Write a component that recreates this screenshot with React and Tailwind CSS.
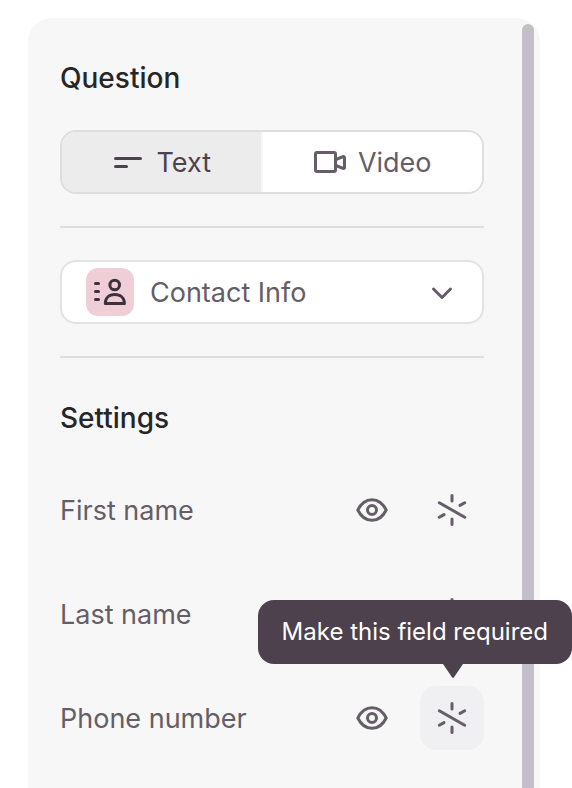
function Svg({ size = 32, children }) {
  return (
    <svg
      width={size}
      height={size}
      viewBox={`0 0 ${size} ${size}`}
      fill="none"
      stroke="currentColor"
      strokeWidth="3"
      strokeLinecap="round"
      strokeLinejoin="round"
      className="shrink-0"
      aria-hidden="true"
    >
      {children}
    </svg>
  );
}

function TextIcon() {
  return (
    <Svg>
      <path d="M3.5 12.5h25M3.5 20.5h11" />
    </Svg>
  );
}

function VideoIcon() {
  return (
    <Svg>
      <rect x="1.5" y="6.5" width="20" height="19" rx="1.5" />
      <path d="M22 13.5 29 10.6Q30.5 10.2 30.5 11.6V21.4Q30.5 22.8 29 22.4L22 19.5" />
    </Svg>
  );
}

function ContactIcon() {
  return (
    <Svg size={48}>
      <path d="M9.5 15.5h3M9.5 23.5h3M9.5 31.5h3" />
      <circle cx="28.7" cy="17" r="4.8" />
      <path d="M19.3 35.5C19.3 30.2 23 26.6 28.8 26.6S38.4 30.2 38.4 35.5Z" />
    </Svg>
  );
}

function ChevronIcon() {
  return (
    <Svg>
      <path d="m7.5 13 8.5 8.5 8.5-8.5" />
    </Svg>
  );
}

function EyeIcon() {
  return (
    <Svg>
      <path d="M1.8 16C5 9.6 10 5.7 16 5.7S27 9.6 30.2 16C27 22.4 22 26.3 16 26.3S5 22.4 1.8 16Z" />
      <circle cx="16" cy="16" r="4.5" />
    </Svg>
  );
}

function OptionalIcon() {
  return (
    <Svg>
      <path d="M16 1.5v5.5M16 25v5.5M3.3 8.7l25.4 14.6M28.7 8.7l-4.7 2.7M3.3 23.3l4.7-2.7" />
    </Svg>
  );
}

function FieldRow({ name, hint }) {
  return (
    <li className="flex h-16 items-center">
      <span className="flex-1">{name}</span>
      <button
        type="button"
        aria-label={`Show ${name}`}
        className="mr-4 flex size-16 items-center justify-center rounded-2xl"
      >
        <EyeIcon />
      </button>
      <div className="relative">
        <button
          type="button"
          aria-label={`Make ${name} required`}
          className={`flex size-16 items-center justify-center rounded-2xl ${hint ? "bg-[#f0f0f3]" : ""}`}
        >
          <OptionalIcon />
        </button>
        {hint && (
          <div
            role="tooltip"
            className="absolute -right-22 bottom-full mb-[22px] flex h-16 items-center rounded-2xl bg-[#4c414c] px-6 text-2xl whitespace-nowrap text-white"
          >
            {hint}
            <svg
              width="20"
              height="14"
              viewBox="0 0 20 14"
              className="absolute top-full right-[109px] fill-[#4c414c]"
              aria-hidden="true"
            >
              <path d="M0 0H20L11 13.2Q10 14.4 9 13.2Z" />
            </svg>
          </div>
        )}
      </div>
    </li>
  );
}

const fields = [
  { name: "First name" },
  { name: "Last name" },
  { name: "Phone number", hint: "Make this field required" },
];

export default function App() {
  return (
    <main className="flex h-screen overflow-hidden bg-white pt-[18px] pr-8 pl-7 font-['Inter','Liberation_Sans',sans-serif] text-[27px] leading-[41px] text-[#655d67]">
      <div className="flex flex-1 rounded-t-3xl bg-[#f7f7f7]">
        <div className="flex-1 pt-10 pl-8">
          <h2 className="text-[28px] leading-10 font-medium text-[#262627]">Question</h2>
          <div className="mt-8 flex h-16 gap-0.5 overflow-hidden rounded-2xl border-2 border-[#dedede]">
            <button
              type="button"
              aria-pressed="true"
              className="flex flex-auto items-center justify-center gap-3 bg-[#ececec] text-[#4c414c]"
            >
              <TextIcon />
              Text
            </button>
            <button
              type="button"
              aria-pressed="false"
              className="flex flex-auto items-center justify-center gap-3 bg-white"
            >
              <VideoIcon />
              Video
            </button>
          </div>
          <hr className="mt-8 border-t-2 border-[#dedede]" />
          <div className="relative mt-8">
            <select
              aria-label="Question type"
              className="h-16 w-full appearance-none rounded-2xl border-2 border-[#e3e3e3] bg-white pr-16 pl-[88px]"
            >
              <option>Contact Info</option>
            </select>
            <span className="pointer-events-none absolute inset-y-0 left-6.5 flex items-center text-[#3c323e]">
              <span className="rounded-xl bg-[#f0ced8]">
                <ContactIcon />
              </span>
            </span>
            <span className="pointer-events-none absolute inset-y-0 right-6.5 flex items-center">
              <ChevronIcon />
            </span>
          </div>
          <hr className="mt-8 border-t-2 border-[#dedede]" />
          <h2 className="mt-10 text-[28px] leading-10 font-medium text-[#262627]">Settings</h2>
          <ul className="mt-10 flex flex-col gap-10">
            {fields.map((field) => (
              <FieldRow key={field.name} {...field} />
            ))}
          </ul>
        </div>
        <div className="mt-1.5 mr-1.5 ml-[38px] w-3 rounded-t-full bg-[#c2bfc6]" />
      </div>
    </main>
  );
}
